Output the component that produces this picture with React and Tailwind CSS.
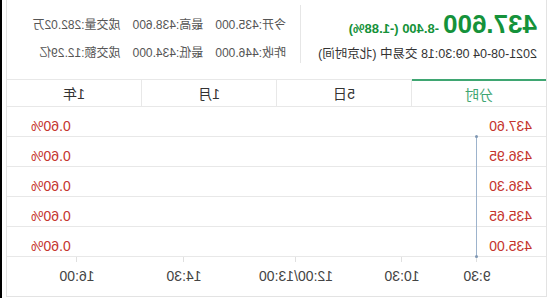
import React from 'react';

const FONT = { fontFamily: '"Liberation Sans", "Noto Sans CJK SC", sans-serif' };

const rows = ['437.60', '436.95', '436.30', '435.65', '435.00'];

const ticks = [
  { x: 69, label: '9:30' },
  { x: 144, label: '10:30' },
  { x: 250, label: '12:00/13:00' },
  { x: 362, label: '14:30' },
  { x: 469, label: '16:00' },
];

const tabs = ['分时', '5日', '1月', '1年'];

const Quote = () => (
  <div className="flex h-[79px]">
    <div className="w-[245px] pl-[9px] pt-[11px]">
      <div className="flex items-baseline gap-[4px] text-[#15923a] font-bold">
        <span className="text-[26px] leading-[26px]">437.600</span>
        <span className="text-[13px]">-8.400 (-1.88%)</span>
      </div>
      <div className="mt-[7px] text-[12.5px] leading-[16px] text-[#333]">
        2021-08-04 09:30:18 交易中 (北京时间)
      </div>
    </div>
    <div className="w-px h-[58px] mt-[5px] bg-[#e6e6e6]"></div>
    <div className="flex-1 pl-[14px] pt-[17px] text-[12px] leading-[16px] text-[#555] flex flex-col gap-[12px]">
      <div className="flex gap-[12px]">
        <span>今开:435.000</span>
        <span>最高:438.600</span>
        <span>成交量:282.02万</span>
      </div>
      <div className="flex gap-[12px]">
        <span>昨收:446.000</span>
        <span>最低:434.000</span>
        <span>成交额:12.29亿</span>
      </div>
    </div>
  </div>
);

const Tabs = () => (
  <div className="flex h-[28px] text-[14px]">
    {tabs.map((t, i) => (
      <div
        key={t}
        className={
          i === 0
            ? 'flex-1 flex items-center justify-center pt-[3px] border-t-2 border-t-[#3fa672] border-b border-b-[#e8e8e8] text-[#3fa672]'
            : 'flex-1 flex items-center justify-center pt-[3px] border-t border-b border-l border-[#e8e8e8] text-[#333]'
        }
      >
        {t}
      </div>
    ))}
  </div>
);

const Chart = () => (
  <div className="relative flex-1 flex flex-col">
    {rows.map((p) => (
      <div key={p} className="h-[30px] border-b border-[#e8e8e8] flex items-end justify-between pl-[14px] pr-[24px] pb-[2px] text-[14px] leading-[16px] text-[#c5342d]">
        <span>{p}</span>
        <span>0.60%</span>
      </div>
    ))}
    <div className="relative flex-1">
      {ticks.map((t) => (
        <div key={t.label}>
          <div className="absolute top-0 w-px h-[5px] bg-[#e0e0e0]" style={{ left: t.x }}></div>
          <div className="absolute top-[11px] -translate-x-1/2 text-[14px] leading-[16px] text-[#444] whitespace-nowrap" style={{ left: t.x }}>
            {t.label}
          </div>
        </div>
      ))}
    </div>
    <div className="absolute left-[69px] top-[29px] w-px h-[121px] bg-[#9db3cc]"></div>
    <div className="absolute left-[68px] top-[28px] w-[3px] h-[3px] rounded-full bg-[#7f97b3]"></div>
    <div className="absolute left-[68px] top-[148px] w-[3px] h-[3px] rounded-full bg-[#7f97b3]"></div>
  </div>
);

export default function App() {
  return (
    <div className="w-[552px] h-[298px] bg-white flex -scale-x-100 overflow-hidden" style={FONT}>
      <div className="w-[5px]"></div>
      <div className="w-[541px] h-[297px] border-x border-b border-[#e3e3e3] flex flex-col">
        <Quote />
        <Tabs />
        <Chart />
      </div>
      <div className="flex-1"></div>
      <div className="w-[2px] bg-black"></div>
    </div>
  );
}
